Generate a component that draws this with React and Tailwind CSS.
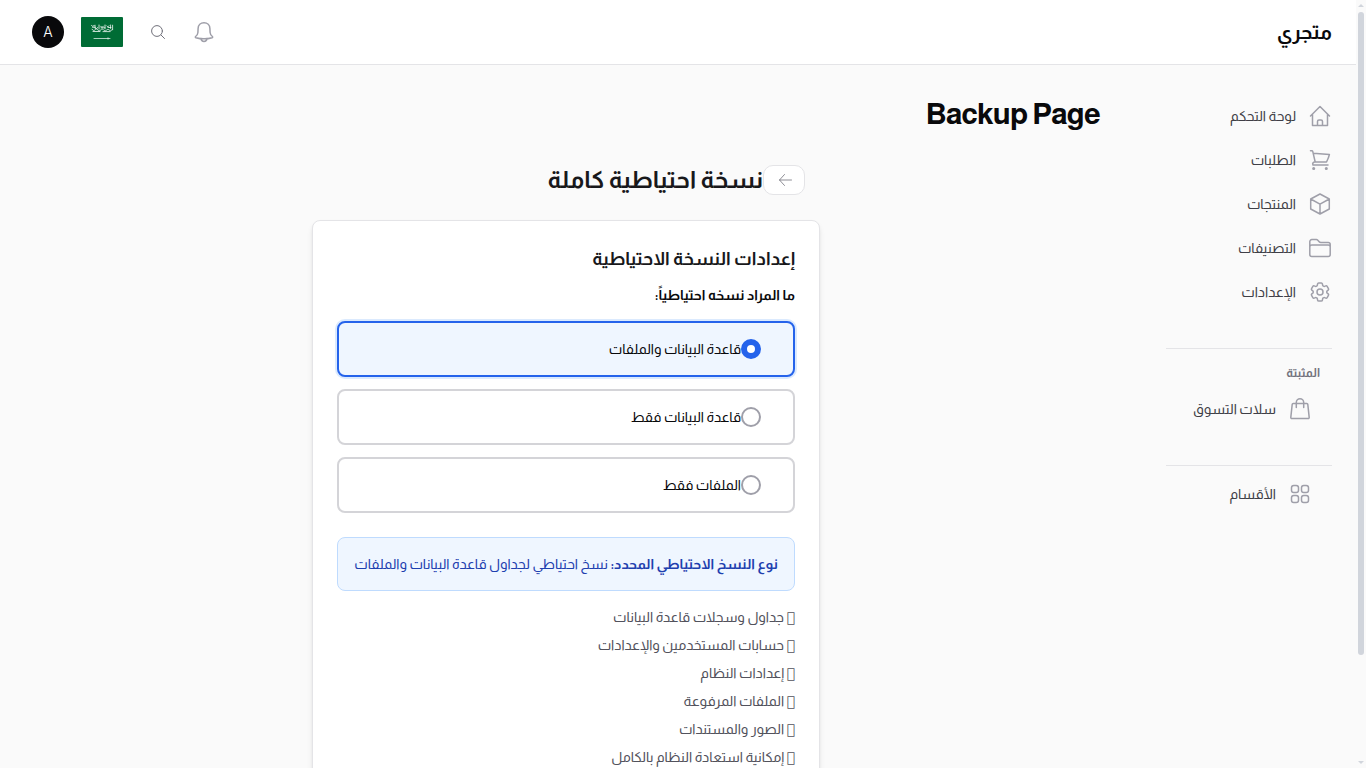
import { useState } from "react";

const stroke = {
  fill: "none",
  stroke: "currentColor",
  strokeWidth: 1.5,
  strokeLinecap: "round",
  strokeLinejoin: "round",
  viewBox: "0 0 24 24",
  "aria-hidden": true,
};

function HomeIcon() {
  return (
    <svg {...stroke} className="size-6 shrink-0">
      <path d="M2.500 12 12 2.500 21.500 12M4.500 10.200V21.500h15V10.200M9.500 21.500v-4a1.500 1.500 0 0 1 1.500-1.500h2a1.500 1.500 0 0 1 1.500 1.500v4" />
    </svg>
  );
}

function CartIcon() {
  return (
    <svg {...stroke} className="size-6 shrink-0">
      <path d="M2.500 2.800h1.300c.5 0 .9.300 1 .8L7.200 14M5.200 5.200l16.200 1.300c-.600 2.600-1.600 5-2.900 7.500H7.200a2 2 0 0 0-2.200 3h15" />
      <circle cx="5.700" cy="20.500" r=".8" fill="currentColor" />
      <circle cx="18.300" cy="20.500" r=".8" fill="currentColor" />
    </svg>
  );
}

function CubeIcon() {
  return (
    <svg {...stroke} className="size-6 shrink-0">
      <path d="m21.300 7-9.300-5L2.700 7m18.600 0L12 12.200 2.700 7m18.600 0v10L12 22m0-9.800L2.700 7m0 0v10l9.300 5m0-9.800V22" />
    </svg>
  );
}

function FolderIcon() {
  return (
    <svg {...stroke} className="size-6 shrink-0">
      <path d="M1.800 11a2 2 0 0 1 2-2h16.400a2 2 0 0 1 2 2M1.800 18.500V5.600a2 2 0 0 1 2-2h4.600c.5 0 1 .2 1.400.6l1.600 1.700c.3.300.8.500 1.300.500h7.500a2 2 0 0 1 2 2v10.100a2 2 0 0 1-2 2H3.800a2 2 0 0 1-2-2Z" />
    </svg>
  );
}

function CogIcon() {
  return (
    <svg {...stroke} className="size-6 shrink-0">
      <path d="M9.594 3.94c.09-.542.56-.94 1.11-.94h2.593c.55 0 1.02.398 1.11.94l.213 1.281c.063.374.313.686.645.87.074.04.147.083.22.127.325.196.72.257 1.075.124l1.217-.456a1.125 1.125 0 0 1 1.37.49l1.296 2.247a1.125 1.125 0 0 1-.26 1.431l-1.003.827c-.293.241-.438.613-.43.992a7.723 7.723 0 0 1 0 .255c-.008.378.137.75.43.991l1.004.827c.424.35.534.955.26 1.43l-1.298 2.247a1.125 1.125 0 0 1-1.369.491l-1.217-.456c-.355-.133-.75-.072-1.076.124a6.47 6.47 0 0 1-.22.128c-.331.183-.581.495-.644.869l-.213 1.281c-.09.543-.56.94-1.11.94h-2.594c-.55 0-1.019-.398-1.11-.94l-.213-1.281c-.062-.374-.312-.686-.644-.87a6.52 6.52 0 0 1-.22-.127c-.325-.196-.72-.257-1.076-.124l-1.217.456a1.125 1.125 0 0 1-1.369-.49l-1.297-2.247a1.125 1.125 0 0 1 .26-1.431l1.004-.827c.292-.24.437-.613.43-.991a6.932 6.932 0 0 1 0-.255c.007-.38-.138-.751-.43-.992l-1.004-.827a1.125 1.125 0 0 1-.26-1.43l1.297-2.247a1.125 1.125 0 0 1 1.37-.491l1.216.456c.356.133.751.072 1.076-.124.072-.044.146-.086.22-.128.332-.183.582-.495.644-.869l.214-1.28Z" />
      <path d="M15 12a3 3 0 1 1-6 0 3 3 0 0 1 6 0Z" />
    </svg>
  );
}

function BagIcon() {
  return (
    <svg {...stroke} className="size-6 shrink-0">
      <path d="M15.700 10.500V5.500a3.700 3.700 0 0 0-7.400 0v5M5.200 6.500h13.600a1 1 0 0 1 1 .9l1.400 13a1 1 0 0 1-1 1.100H3.800a1 1 0 0 1-1-1.100l1.400-13a1 1 0 0 1 1-.9Z" />
    </svg>
  );
}

function GridIcon() {
  return (
    <svg {...stroke} className="size-6 shrink-0">
      <rect x="3.500" y="3.500" width="7" height="7" rx="2.250" />
      <rect x="13.500" y="3.500" width="7" height="7" rx="2.250" />
      <rect x="3.500" y="13.500" width="7" height="7" rx="2.250" />
      <rect x="13.500" y="13.500" width="7" height="7" rx="2.250" />
    </svg>
  );
}

function BellIcon() {
  return (
    <svg {...stroke} className="size-6">
      <path d="M12 2.700c-3.400 0-5.800 2.500-5.900 5.800l-.2 4c-.1 1.600-.7 2.800-2.300 4-.5.500-.3 1 .3 1.200 5.200 1.500 11 1.500 16.200 0 .6-.2.800-.7.300-1.200-1.600-1.200-2.200-2.400-2.300-4l-.2-4c-.1-3.300-2.500-5.800-5.900-5.800ZM9 18.600c.2 1.800 1.300 2.800 3 2.800s2.800-1 3-2.800" />
    </svg>
  );
}

function SearchIcon() {
  return (
    <svg {...stroke} strokeWidth={1} viewBox="0 0 16 16" className="size-4">
      <circle cx="7" cy="7" r="5.400" />
      <path d="m11 11 3.500 3.500" />
    </svg>
  );
}

function Flag() {
  return (
    <svg viewBox="0 0 42 30" className="h-[30px] w-[42px] rounded-[1px]" aria-hidden="true">
      <rect width="42" height="30" fill="#006c35" />
      <g fill="none" stroke="#fff" strokeOpacity=".85" strokeWidth=".9" strokeLinecap="round">
        <path d="M10.500 8.400c1 1.600 2 1.400 2.600 0M14 8.200v3.200c1.200.8 2.200.3 2.600-.8M18 8v4M19.500 9.200c1 1.400 2.200 1.400 3 0M24 8v3.800M25.500 8.800c.8 1.200 2 1.200 2.600 0M29.600 8v3.500M31.600 8.200v4.600" />
        <path d="M11 12.200c1 1.600 2.200 1.700 3.200.4s2-1 2.600.3 2 1.200 3 0 2-1.200 2.800 0 2 1.300 3 .2 2-.8 3 .2 1.600.6 2.400-.6M12 14.500h7M22 14.600h7M11.500 10.300h3M20 10.800h4M27 10.500h3" />
        <path d="M13 21.500h16M27 20.800v1.400" strokeWidth=".8" />
      </g>
    </svg>
  );
}

const mainLinks = [
  ["لوحة التحكم", HomeIcon],
  ["الطلبات", CartIcon],
  ["المنتجات", CubeIcon],
  ["التصنيفات", FolderIcon],
  ["الإعدادات", CogIcon],
];

const options = ["قاعدة البيانات والملفات", "قاعدة البيانات فقط", "الملفات فقط"];

const features = [
  "جداول وسجلات قاعدة البيانات",
  "حسابات المستخدمين والإعدادات",
  "إعدادات النظام",
  "الملفات المرفوعة",
  "الصور والمستندات",
  "إمكانية استعادة النظام بالكامل",
];

const bullet = "\u{10fffd}";

function NavLink({ label, Icon }) {
  return (
    <a href="#" className="flex h-11 items-center gap-3 text-sm text-zinc-700">
      <span className="text-zinc-400">
        <Icon />
      </span>
      {label}
    </a>
  );
}

function ScrollTrack() {
  return (
    <div className="flex w-2.5 shrink-0 flex-col items-center pt-1 pb-1" aria-hidden="true">
      <svg viewBox="0 0 6 3" className="h-[3px] w-1.5 fill-gray-300">
        <path d="M3 0 6 3H0Z" />
      </svg>
      <div className="flex w-full flex-1 justify-center py-[5px]">
        <div className="h-32/37 w-1.5 rounded-full bg-gray-300" />
      </div>
      <svg viewBox="0 0 6 3" className="h-[3px] w-1.5 fill-gray-300">
        <path d="M0 0h6L3 3Z" />
      </svg>
    </div>
  );
}

export default function App() {
  const [selected, setSelected] = useState(0);

  return (
    <div className="flex h-screen bg-[#fafafa] font-[Almarai,'Liberation_Sans',sans-serif] text-zinc-950">
      <div dir="rtl" className="min-w-0 flex-1 overflow-y-auto [scrollbar-width:none]">
        <header className="flex h-[65px] items-center justify-between border-b border-zinc-200 bg-white pr-6 pl-8">
          <a href="#" className="text-xl leading-7 font-bold">
            متجري
          </a>
          <div className="flex items-center">
            <button type="button" aria-label="الإشعارات" className="ml-[26px] text-zinc-400">
              <BellIcon />
            </button>
            <button type="button" aria-label="بحث" className="ml-[26px] text-zinc-500">
              <SearchIcon />
            </button>
            <button type="button" aria-label="اللغة" className="ml-4 p-px">
              <Flag />
            </button>
            <button
              type="button"
              className="flex size-8 items-center justify-center rounded-full bg-zinc-950 font-[Inter,sans-serif] text-sm font-light text-white"
            >
              A
            </button>
          </div>
        </header>

        <div className="flex items-start">
          <nav className="w-56 shrink-0 pt-[29px] pr-6 pl-[34px]">
            {mainLinks.map(([label, Icon]) => (
              <NavLink key={label} label={label} Icon={Icon} />
            ))}
            <div className="mt-[34px] border-t border-zinc-200 pt-4">
              <h2 className="px-3 text-xs leading-4 font-semibold text-zinc-500">المثبتة</h2>
              <div className="mt-1.5 pr-5">
                <NavLink label="سلات التسوق" Icon={BagIcon} />
              </div>
            </div>
            <div className="mt-[34px] border-t border-zinc-200 pt-1.5 pr-5">
              <NavLink label="الأقسام" Icon={GridIcon} />
            </div>
          </nav>

          <main className="min-w-0 flex-1 px-8 py-8">
            <h1 className="text-3xl leading-[34px] font-bold tracking-tight">Backup Page</h1>
            <div className="mx-auto mt-[34px] w-full max-w-[508px]">
              <div className="flex h-[30px] items-center px-[15px]">
                <a
                  href="#"
                  aria-label="رجوع"
                  className="flex h-[30px] w-[42px] items-center justify-center rounded-[10px] border border-zinc-200 bg-white text-zinc-500"
                >
                  <svg {...stroke} strokeWidth={0.8} viewBox="0 0 16 16" className="size-4">
                    <path d="M15.500 8h-12M8.500 2.500 3.500 8l5 5.500" />
                  </svg>
                </a>
                <h2 className="text-2xl leading-8 font-bold text-zinc-900">نسخة احتياطية كاملة</h2>
              </div>

              <section className="mt-[25px] rounded-lg border border-zinc-200 bg-white p-6 shadow-md">
                <h3 className="text-lg leading-7 font-semibold text-zinc-900">إعدادات النسخة الاحتياطية</h3>
                <fieldset className="mt-3">
                  <legend className="text-sm leading-5 font-semibold">ما المراد نسخه احتياطياً:</legend>
                  <div className="mt-4 flex flex-col gap-3">
                    {options.map((label, i) => (
                      <label
                        key={label}
                        className={
                          selected === i
                            ? "flex h-14 cursor-pointer items-center rounded-lg border-2 border-[#2563eb] bg-[#eff6ff] px-8 text-sm ring-2 ring-[#dbeafe]"
                            : "flex h-14 cursor-pointer items-center rounded-lg border-2 border-zinc-300 bg-white px-8 text-sm"
                        }
                      >
                        <input
                          type="radio"
                          name="scope"
                          checked={selected === i}
                          onChange={() => setSelected(i)}
                          className="size-5 shrink-0 appearance-none rounded-full border-2 border-zinc-400 bg-white checked:border-[6px] checked:border-[#2563eb]"
                        />
                        {label}
                      </label>
                    ))}
                  </div>
                </fieldset>

                <p className="mt-6 rounded-lg border border-[#bfdbfe] bg-[#eff6ff] p-4 text-sm leading-5 text-[#1e40af]">
                  <strong className="font-semibold">نوع النسخ الاحتياطي المحدد:</strong> نسخ احتياطي لجداول قاعدة
                  البيانات والملفات
                </p>

                <ul className="mt-4 flex flex-col gap-2 text-sm leading-5 text-zinc-600">
                  {features.map((f) => (
                    <li key={f}>
                      <span className="font-['DejaVu_Sans',sans-serif]">{bullet}</span> {f}
                    </li>
                  ))}
                </ul>
              </section>
            </div>
          </main>
        </div>
      </div>
      <ScrollTrack />
    </div>
  );
}
